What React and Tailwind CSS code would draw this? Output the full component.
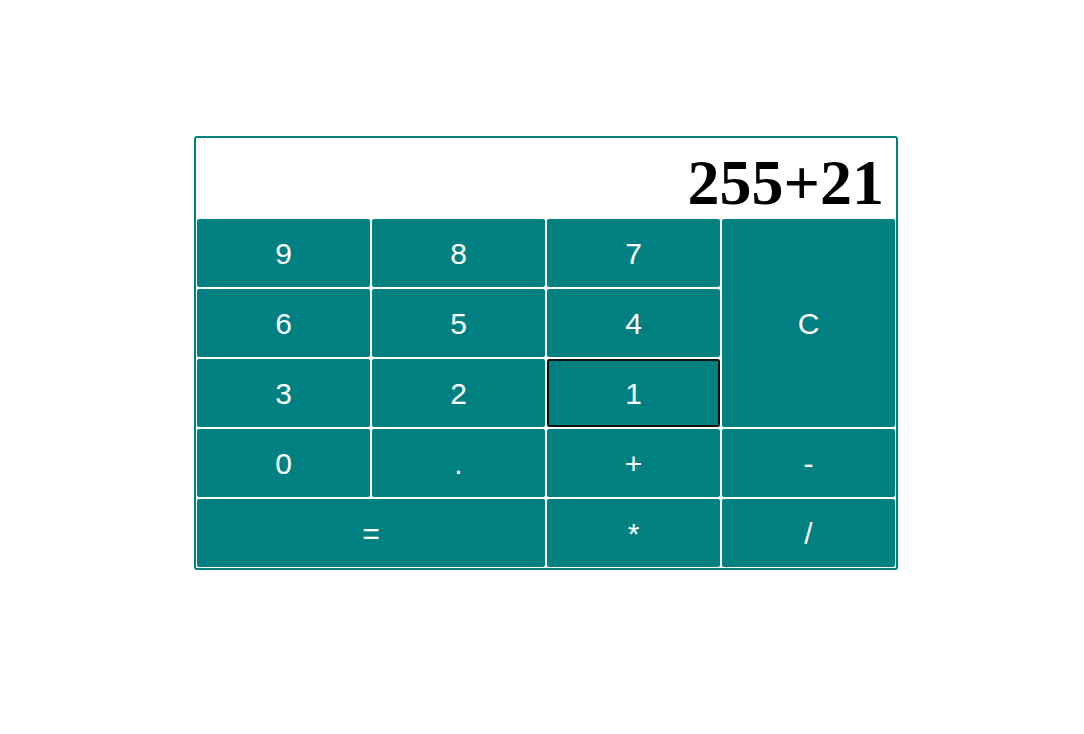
import React from "react";

const keys = [
  { label: "9" },
  { label: "8" },
  { label: "7" },
  { label: "C", span: "row-span-3" },
  { label: "6" },
  { label: "5" },
  { label: "4" },
  { label: "3" },
  { label: "2" },
  { label: "1", focused: true },
  { label: "0" },
  { label: "." },
  { label: "+" },
  { label: "-" },
  { label: "=", span: "col-span-2" },
  { label: "*" },
  { label: "/" },
];

export default function App() {
  return (
    <div className="min-h-[734px] bg-white pt-[136px] pl-[194px]">
      <div className="w-[704px] rounded-[3px] border-2 border-[#008080] bg-white">
        <div className="flex h-[80px] items-end justify-end pb-[3px] pr-3 font-['Liberation_Serif',serif] text-[64px] font-bold leading-none text-black">
          255+21
        </div>
        <div className="grid grid-cols-4 grid-rows-[repeat(5,70px)]">
          {keys.map((k) => (
            <button
              key={k.label}
              className={`${k.span || ""} rounded-[3px] border border-white bg-[#008080] font-['Liberation_Sans',Arial,sans-serif] text-[30px] text-white ${
                k.focused ? "shadow-[inset_0_0_0_2px_#111]" : ""
              }`}
            >
              {k.label}
            </button>
          ))}
        </div>
      </div>
    </div>
  );
}
